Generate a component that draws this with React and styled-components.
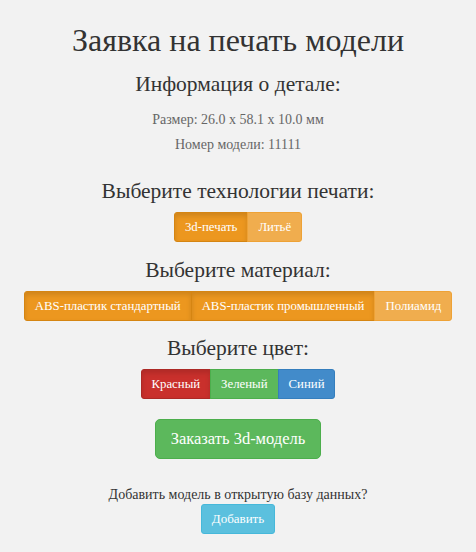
import React, { useState } from "react";
import styled, { createGlobalStyle, css } from "styled-components";

const GlobalStyle = createGlobalStyle`
  html, body {
    margin: 0;
    padding: 0;
    background: #f2f2f2;
  }
  body {
    font-family: "Liberation Serif", "Times New Roman", serif;
    color: #333;
  }
`;

const Page = styled.div`
  display: flex;
  flex-direction: column;
  align-items: center;
  padding-top: 20px;
  text-align: center;
  font-family: "Liberation Serif", serif;
`;

const Title = styled.h1`
  margin: 0;
  font-family: "Liberation Serif", serif;
  font-size: 32px;
  font-weight: normal;
  line-height: 40px;
`;

const SubTitle = styled.h3`
  margin: ${props => props.top || 12}px 0 0;
  font-family: "Liberation Serif", serif;
  font-size: 21.5px;
  font-weight: normal;
  line-height: 28px;
`;

const Info = styled.p`
  margin: ${props => props.top || 0}px 0 0;
  font-family: "Liberation Serif", serif;
  font-size: 14px;
  line-height: 20px;
  color: ${props => props.muted ? "#666" : "#333"};
`;

const Group = styled.div`
  display: flex;
  margin-top: 7px;
`;

const palette = {
  warning: { bg: "#f0ad4e", border: "#eea236", active: "#ec971f", activeBorder: "#d58512" },
  danger: { bg: "#d9534f", border: "#d43f3a", active: "#c9302c", activeBorder: "#ac2925" },
  success: { bg: "#5cb85c", border: "#4cae4c", active: "#449d44", activeBorder: "#398439" },
  primary: { bg: "#428bca", border: "#357ebd", active: "#3071a9", activeBorder: "#285e8e" },
};

const GroupButton = styled.button`
  font-family: "Liberation Serif", serif;
  font-size: 12.8px;
  line-height: 18px;
  padding: 5px 10px;
  color: #fff;
  cursor: pointer;
  white-space: nowrap;
  background: ${props => palette[props.kind].bg};
  border: 1px solid ${props => palette[props.kind].border};
  margin-left: -1px;
  &:first-child {
    margin-left: 0;
    border-radius: 3px 0 0 3px;
  }
  &:last-child {
    border-radius: 0 3px 3px 0;
  }
  ${props =>
    props.active &&
    css`
      background: ${palette[props.kind].active};
      border-color: ${palette[props.kind].activeBorder};
      box-shadow: inset 0 3px 5px rgba(0, 0, 0, 0.125);
    `}
`;

const OrderButton = styled.button`
  margin-top: 20px;
  font-family: "Liberation Serif", serif;
  font-size: 16.5px;
  line-height: 22px;
  padding: 8px 15px;
  white-space: nowrap;
  color: #fff;
  background: #5cb85c;
  border: 1px solid #4cae4c;
  border-radius: 5px;
  cursor: pointer;
`;

const AddButton = styled.button`
  margin-top: -1px;
  font-family: "Liberation Serif", serif;
  font-size: 13px;
  line-height: 18px;
  padding: 5px 10px;
  white-space: nowrap;
  color: #fff;
  background: #5bc0de;
  border: 1px solid #46b8da;
  border-radius: 3px;
  cursor: pointer;
`;

const techs = ["3d-печать", "Литьё"];
const materials = ["ABS-пластик стандартный", "ABS-пластик промышленный", "Полиамид"];
const colors = [
  { name: "Красный", kind: "danger" },
  { name: "Зеленый", kind: "success" },
  { name: "Синий", kind: "primary" },
];

export default () => {
  const [tech, setTech] = useState(0);
  const [color, setColor] = useState(0);

  return (
    <Page>
      <GlobalStyle />
      <Title>Заявка на печать модели</Title>
      <SubTitle top={10}>Информация о детале:</SubTitle>
      <Info top={12} muted>Размер: 26.0 x 58.1 x 10.0 мм</Info>
      <Info top={5} muted>Номер модели: 11111</Info>

      <SubTitle top={22}>Выберите технологии печати:</SubTitle>
      <Group>
        {techs.map((t, i) => (
          <GroupButton key={t} kind="warning" active={tech === i} onClick={() => setTech(i)}>
            {t}
          </GroupButton>
        ))}
      </Group>

      <SubTitle top={14}>Выберите материал:</SubTitle>
      <Group>
        {materials.map((m, i) => (
          <GroupButton key={m} kind="warning" active={i < 2}>
            {m}
          </GroupButton>
        ))}
      </Group>

      <SubTitle top={13}>Выберите цвет:</SubTitle>
      <Group>
        {colors.map((c, i) => (
          <GroupButton
            key={c.name}
            kind={c.kind}
            active={color === i && c.kind === "danger"}
            onClick={() => setColor(i)}
          >
            {c.name}
          </GroupButton>
        ))}
      </Group>

      <OrderButton>Заказать 3d-модель</OrderButton>

      <Info top={26}>Добавить модель в открытую базу данных?</Info>
      <AddButton>Добавить</AddButton>
    </Page>
  );
};
